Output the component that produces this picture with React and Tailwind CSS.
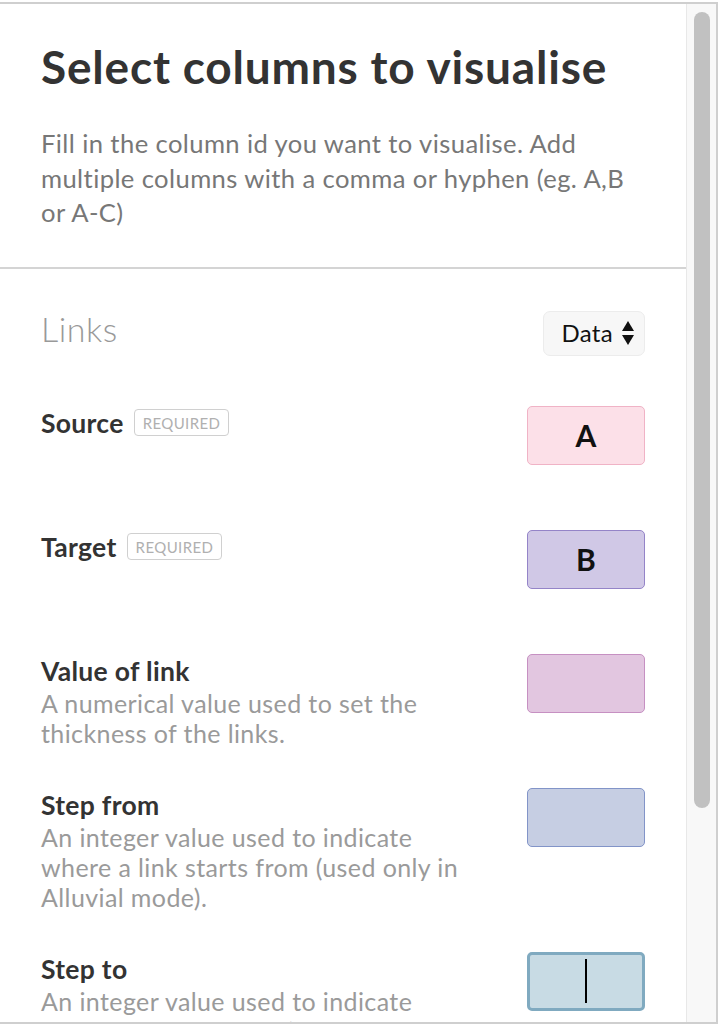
import React from 'react';

const font = { fontFamily: 'Lato, "Noto Sans", sans-serif' };

function Required() {
  return (
    <span className="ml-[10px] inline-flex h-[27px] items-center rounded-[4px] border-[1.5px] border-[#d0d0d0] px-[8px] text-[15px] font-normal tracking-[0.4px] text-[#b0b0b0]">
      REQUIRED
    </span>
  );
}

function ColumnBox({ value, bg, border, focused }) {
  return (
    <div
      className={
        'flex h-[59px] w-[118px] shrink-0 items-center justify-center rounded-[5px] text-[30px] font-bold text-[#111] ' +
        bg + ' ' + border + (focused ? ' border-[3px]' : ' border-[1.5px]')
      }
    >
      {value}
      {focused && <span className="h-[44px] w-[2px] bg-black" />}
    </div>
  );
}

function Row({ label, required, desc, value, bg, border, focused, tall }) {
  return (
    <div className={'mb-[40px] flex items-start justify-between ' + (tall ? 'min-h-[84px]' : '')}>
      <div className="max-w-[435px]">
        <div className="flex items-center text-[26.5px] font-bold leading-[34px] tracking-[0.3px] text-[#333]">
          {label}
          {required && <Required />}
        </div>
        {desc && <p className="text-[25px] leading-[30px] tracking-[0.4px] text-[#9a9a9a]">{desc}</p>}
      </div>
      <ColumnBox value={value} bg={bg} border={border} focused={focused} />
    </div>
  );
}

function SortArrows() {
  return (
    <svg width="14" height="26" viewBox="0 0 14 26" className="ml-[8px]">
      <path d="M7 1 L13 11 H1 Z" fill="#111" />
      <path d="M7 25 L13 15 H1 Z" fill="#111" />
    </svg>
  );
}

export default function App() {
  return (
    <div className="h-[1026px] w-[718px] bg-white pt-[2px]" style={font}>
      <div className="flex h-[1022px] overflow-hidden border-y-2 border-r-2 border-[#cfcfcf]">
        <div className="flex-1 overflow-hidden border-r border-[#e8e8e8]">
          <div className="border-b-2 border-[#d4d4d4] px-[41px] pb-[37px] pt-[35px]">
            <h1 className="text-[46px] font-bold leading-[56px] tracking-[0.8px] text-[#333]">
              Select columns to visualise
            </h1>
            <p className="mt-[31px] text-[25.6px] leading-[34.5px] tracking-[0.4px] text-[#777]">
              Fill in the column id you want to visualise. Add multiple columns with a comma or hyphen (eg. A,B or A-C)
            </p>
          </div>

          <div className="px-[41px] pt-[42px]">
            <div className="mb-[50px] flex items-start justify-between">
              <h2 className="text-[34px] font-light leading-[36px] tracking-[0.5px] text-[#999]">Links</h2>
              <button className="flex h-[45px] items-center rounded-[7px] border border-[#ececec] bg-[#f7f7f7] pl-[18px] pr-[9px] text-[24px] tracking-[0.3px] text-[#111]">
                Data
                <SortArrows />
              </button>
            </div>

            <Row label="Source" required value="A" bg="bg-[#fce0e8]" border="border-[#f0b3c6]" tall />
            <Row label="Target" required value="B" bg="bg-[#d0c8e6]" border="border-[#9484c8]" tall />
            <Row
              label="Value of link"
              desc="A numerical value used to set the thickness of the links."
              bg="bg-[#e2c6e0]"
              border="border-[#c690c2]"
            />
            <Row
              label="Step from"
              desc="An integer value used to indicate where a link starts from (used only in Alluvial mode)."
              bg="bg-[#c6cee3]"
              border="border-[#8294c8]"
            />
            <Row
              label="Step to"
              desc="An integer value used to indicate where a link starts to (used only in Alluvial mode)."
              bg="bg-[#c8dbe4]"
              border="border-[#80aac0]"
              focused
            />
          </div>
        </div>

        <div className="w-[29px] shrink-0 bg-[#f8f8f8] pt-[8px]">
          <div className="ml-[7px] h-[796px] w-[16px] rounded-full bg-[#c1c1c1]" />
        </div>
      </div>
    </div>
  );
}
